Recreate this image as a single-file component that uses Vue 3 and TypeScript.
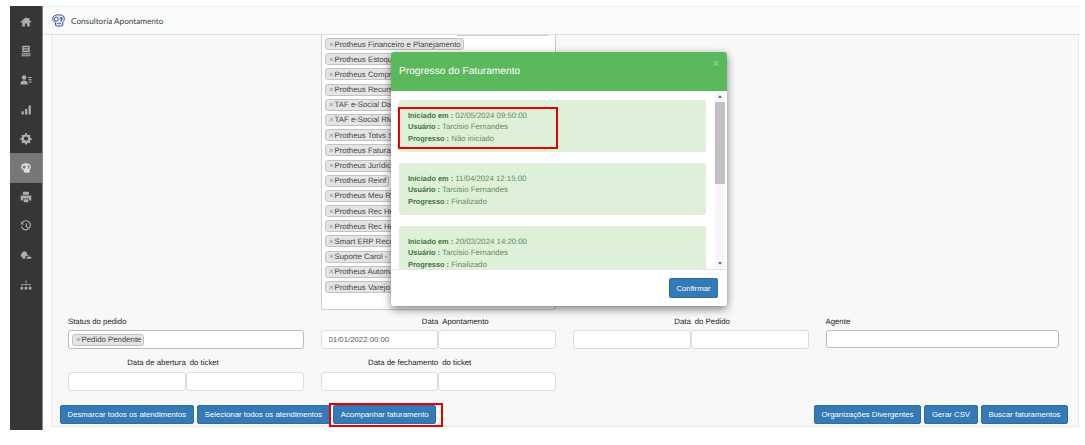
<script setup lang="ts">
const services: string[] = [
  'Protheus Financeiro e Planejamento', 'Protheus Estoque e Custos', 'Protheus Compras e Contratos',
  'Protheus Recursos Humanos', 'TAF e-Social Datasul', 'TAF e-Social RM', 'Protheus Totvs Saúde',
  'Protheus Faturamento', 'Protheus Jurídico', 'Protheus Reinf', 'Protheus Meu RH', 'Protheus Rec Humanos',
  'Protheus Rec Humanos II', 'Smart ERP Recursos', 'Suporte Carol - TOTVS', 'Protheus Automação', 'Protheus Varejo',
]
const history = [
  { date: '02/05/2024 09:50:00', status: 'Não iniciado' },
  { date: '11/04/2024 12:15:00', status: 'Finalizado' },
  { date: '20/03/2024 14:20:00', status: 'Finalizado' },
]
</script>

<template>
  <div class="page">
    <aside class="side">
      <div class="item"><svg viewBox="0 0 16 16"><path d="M8 1.500 .5 8l1 1L3 7.800V14h3.600v-4h2.800v4H13V7.800L14.500 9l1-1-3-2.600V2.500h-2v1.200z"/></svg></div>
      <div class="item"><svg viewBox="0 0 16 16"><path d="M3 1h10v8.500H3zM4.800 3v1.400h6.400V3zM4.800 6v1.400h6.400V6zM2 11h12v1.500H2zM2 13.500h12V15H2z"/></svg></div>
      <div class="item"><svg viewBox="0 0 16 16"><circle cx="5.500" cy="4.500" r="3"/><path d="M.5 14c0-3.500 2-5.500 5-5.500s5 2 5 5.500zM11 4h4.500v1.200H11zM11 7h4.500v1.200H11zM11.500 10h4v1.200h-4z"/></svg></div>
      <div class="item"><svg viewBox="0 0 16 16"><path d="M2 9.500h3V14H2zM6.700 6.500h3V14h-3zM11.400 2h3v12h-3z"/></svg></div>
      <div class="item"><svg viewBox="0 0 16 16"><path fill-rule="evenodd" d="M6.700 1h2.600l.4 2 1.300.6 1.700-1.100 1.800 1.800-1.100 1.700.6 1.300 2 .4v2.600l-2 .4-.6 1.300 1.100 1.700-1.800 1.800-1.700-1.100-1.300.6-.4 2H6.700l-.4-2-1.300-.6-1.700 1.100-1.800-1.800 1.100-1.700-.6-1.300-2-.4V7.700l2-.4.6-1.300-1.100-1.700 1.800-1.800L5 3.600l1.300-.6zM8 5.500a3 3 0 1 0 0 6 3 3 0 0 0 0-6z" transform="translate(.5 -.5) scale(.94)"/></svg></div>
      <div class="item active"><svg viewBox="0 0 16 16"><path fill-rule="evenodd" d="M8 1.500c3.500 0 6.500 1.500 6.500 4.500 0 2-.5 3-1.500 4v3.500c-2 1.200-6 1.200-8 0V11C2.500 10 1.500 8 1.500 6 1.500 3 4.500 1.500 8 1.500zM5.500 4.500a2 2 0 1 0 0 4 2 2 0 0 0 0-4zM10 5v1.200h1.500L10 9h1.500l1.500-4z"/></svg></div>
      <div class="item"><svg viewBox="0 0 16 16"><path fill-rule="evenodd" d="M4 1h8v4H4zM1 6h14v6.500h-3V10H4v2.500H1zM5 11h6v4H5z"/></svg></div>
      <div class="item"><svg viewBox="0 0 16 16" class="line"><path d="M3 3.500A6 6 0 1 1 2 8.500"/><path d="M8.500 4.500v4l2.500 2"/><path class="tip" d="M1.500 2v4h4z"/></svg></div>
      <div class="item"><svg viewBox="0 0 16 16"><path d="M1 9.500c0-3.500 2.500-6 5-6.500 1.500 0 3 1 3.500 3.500L11 9H8.500v1H7v3H3.500L3 11zM9 10.500h6V13H9zM10.500 9h3v1h-3z"/></svg></div>
      <div class="item"><svg viewBox="0 0 16 16"><path d="M7.400 1.500h1.200v4H7.400zM2 6.500h12V10h-1V7.500H8.500V10h-1V7.500H3V10H2zM.8 10.500h3.400V14H.8zM6.300 10.500h3.400V14H6.300zM11.800 10.500h3.400V14h-3.400z"/></svg></div>
    </aside>

    <main class="main">
      <header class="top">
        <svg class="brand" viewBox="0 0 16 16"><path fill="#dfe3f2" stroke="#3f5296" stroke-width="1.200" d="M8 1c3.800 0 7.300 1 7.300 4.500 0 2-.7 3.200-2 4.300V14c-2.500 1.300-6.700 1.300-9 0v-3.600C2.200 9.500.8 7.700.8 5.500.8 2.500 4.200 1 8 1z"/><circle cx="5.300" cy="6.200" r="2.300" fill="#fff" stroke="#3f5296" stroke-width="1.200"/><path d="M9.500 4.200h4L11.800 9h-1.700l1.300-3.300H9.500z" fill="#3f5296"/><path d="M6 11.500h5" stroke="#3f5296"/></svg>
        <span>Consultoria Apontamento</span>
      </header>

      <section class="panel">
        <div class="list-row">
          <div class="list-box">
            <div class="search-edge"></div>
            <div v-for="s in services" :key="s" class="list-line">
              <span class="chip"><i>×</i>{{ s }}</span>
            </div>
          </div>
        </div>

        <div class="form">
          <div class="field">
            <label>Status do pedido</label>
            <div class="select"><span class="chip"><i>×</i>Pedido Pendente</span></div>
          </div>
          <div class="field">
            <div class="pair-label"><label>Data</label><label>Apontamento</label></div>
            <div class="pair"><input value="01/01/2022 00:00" readonly><input readonly></div>
          </div>
          <div class="field">
            <div class="pair-label"><label>Data</label><label>do Pedido</label></div>
            <div class="pair"><input readonly><input readonly></div>
          </div>
          <div class="field">
            <label>Agente</label>
            <div class="select agent"></div>
          </div>
          <div class="field">
            <div class="pair-label"><label>Data de abertura</label><label>do ticket</label></div>
            <div class="pair"><input readonly><input readonly></div>
          </div>
          <div class="field">
            <div class="pair-label"><label>Data de fechamento</label><label>do ticket</label></div>
            <div class="pair"><input readonly><input readonly></div>
          </div>
        </div>

        <div class="actions">
          <button>Desmarcar todos os atendimentos</button>
          <button>Selecionar todos os atendimentos</button>
          <button class="marked">Acompanhar faturamento</button>
          <span class="spacer"></span>
          <button>Organizações Divergentes</button>
          <button>Gerar CSV</button>
          <button>Buscar faturamentos</button>
        </div>
      </section>
    </main>

    <div class="modal">
      <div class="modal-head">
        <h4>Progresso do Faturamento</h4>
        <span class="close">×</span>
      </div>
      <div class="modal-body">
        <div class="scroll-content">
          <div v-for="(h, i) in history" :key="h.date" class="alert">
            <div :class="{ marked: i === 0 }" class="alert-text">
              <p><b>Iniciado em :</b> {{ h.date }}</p>
              <p><b>Usuário :</b> Tarcisio Fernandes</p>
              <p><b>Progresso :</b> {{ h.status }}</p>
            </div>
          </div>
        </div>
        <div class="scrollbar">
          <svg viewBox="0 0 8 8"><path d="M4 2 7 6H1z"/></svg>
          <div class="thumb"></div>
          <svg viewBox="0 0 8 8"><path d="M4 6 7 2H1z"/></svg>
        </div>
      </div>
      <div class="modal-foot"><button>Confirmar</button></div>
    </div>
  </div>
</template>

<style>
html, body { margin: 0; background: #fff; }
</style>

<style scoped>
.page {
  position: relative; width: 1085px; height: 445px; overflow: hidden; display: flex; align-items: flex-start;
  padding: 6px 0 0 10px; box-sizing: border-box; text-rendering: geometricPrecision;
  font-family: "Liberation Sans", Arial, sans-serif; font-size: 7.800px; color: #333;
}
.side {
  width: 33px; height: 424px; box-sizing: border-box; flex: none; background: #363636; border-right: 1px solid #8a8a8a;
  display: flex; flex-direction: column; padding-top: 1.400px;
}
.item { height: 29.200px; flex: none; display: flex; align-items: center; justify-content: center; }
.item svg { width: 12px; height: 12px; fill: #aeaeae; }
.item svg.line { fill: none; stroke: #aeaeae; stroke-width: 1.500; }
.item .tip { fill: #aeaeae; stroke: none; }
.item.active { background: #777; }
.item.active svg { fill: #dcdcdc; }
.main { width: 1037px; flex: none; display: flex; flex-direction: column; }
.top {
  height: 29px; box-sizing: border-box; flex: none; background: #f9fafa; border-top: 1px solid #eef0ef; border-bottom: 1px solid #dcdfdf;
  display: flex; align-items: center; gap: 6px; padding-left: 9px; font-family: Lato, sans-serif; font-size: 8.200px; color: #444;
}
.brand { width: 13px; height: 13px; }
.panel {
  margin-left: 8px; width: 1028px; height: 392px; background: #f8f8f8; border-left: 1px solid #eaeaea; border-right: 1px solid #eaeaea;
  border-bottom: 1px solid #eaeaea; display: flex; flex-direction: column; box-sizing: border-box;
}
.list-row { padding-left: 269px; height: 275px; flex: none; }
.list-box {
  width: 235px; height: 275px; box-sizing: border-box; background: #fff; border: 1px solid #ccc; border-top: 0;
  border-radius: 0 0 3px 3px; padding: 0 3px;
}
.search-edge { width: 91px; margin-left: 132px; height: 0; border-bottom: 1px solid #ccc; margin-bottom: -1px; }
.list-line { height: 15.200px; box-sizing: border-box; display: flex; align-items: flex-start; padding-top: 3px; white-space: nowrap; overflow: hidden; }
.chip {
  display: inline-flex; align-items: center; height: 12px; box-sizing: border-box; padding: 0 2px 0 3px;
  background: #e4e4e4; border: 1px solid #c2c2c2; border-radius: 3px; font-size: 7.800px; color: #444; white-space: nowrap;
}
.chip i { font-style: normal; color: #888; margin-right: 1px; }
.form {
  display: grid; grid-template-columns: repeat(4, 235.500px); column-gap: 17px; row-gap: 8px;
  padding: 5.500px 0 0 16px; flex: none;
}
.field { display: flex; flex-direction: column; }
.field label { color: #222; line-height: 12px; height: 12px; margin-bottom: 2.500px; }
.pair-label { display: grid; grid-template-columns: 1fr 1fr; }
.pair-label label:first-child { text-align: right; }
.pair-label label:last-child { padding-left: 4px; }
.pair { display: grid; grid-template-columns: 1fr 1fr; }
.pair input {
  width: 100%; height: 19px; box-sizing: border-box; border: 1px solid #ddd; border-radius: 3px; background: #fff;
  padding: 0 7px; font: 7.800px "Liberation Sans", sans-serif; color: #555; outline: none; min-width: 0;
}
.select { height: 19px; box-sizing: border-box; background: #fff; border: 1px solid #bbb; border-radius: 3px; padding: 2.500px 3px; display: flex; align-items: flex-start; }
.select .chip { height: 12.500px; }
.select.agent { height: 18px; margin-right: 2px; }
.actions { display: flex; gap: 3.500px; padding: 14.500px 10px 0 8px; align-items: flex-start; }
.spacer { flex: 1; }
button {
  height: 19px; padding: 0 6.500px; background: #337ab7; color: #fff; border: 1px solid #2e6da4; border-radius: 2px;
  font: 7.800px "Liberation Sans", sans-serif; white-space: nowrap; margin: 0;
}
.actions button.marked { position: relative; }
.actions button.marked::after {
  content: ""; position: absolute; inset: -2.700px -7.500px -4.300px -5.500px; border: 2px solid #e60000; pointer-events: none;
}
.modal {
  position: absolute; left: 391px; top: 52px; width: 336px; height: 254px; background: #fff; border-radius: 3px;
  box-shadow: 0 3px 9px rgba(0,0,0,.5); display: flex; flex-direction: column; overflow: hidden;
}
.modal-head { height: 39px; flex: none; background: #5cb85c; color: #fff; display: flex; align-items: center; padding-left: 8px; position: relative; }
.modal-head h4 { margin: 0; font-weight: 400; font-size: 10.200px; }
.close { position: absolute; right: 8px; top: 6px; font-size: 11px; color: #8ccb8c; font-weight: 700; }
.modal-body { height: 178px; flex: none; display: flex; overflow: hidden; }
.scroll-content { flex: 1; padding: 9px 9px 0 8px; overflow: hidden; }
.alert { height: 52px; background: #dff0d8; border-radius: 2px; margin-bottom: 11px; color: #3c763d; padding: 9.500px 0 0 9px; box-sizing: border-box; position: relative; line-height: 11.500px; }
.alert p { margin: 0; color: #5c8f5c; }
.alert b { color: #3c763d; font-weight: 700; font-size: 7.400px; }
.alert-text.marked::after {
  content: ""; position: absolute; left: -1px; top: 7px; width: 160px; height: 42px; border: 2px solid #e60000; box-sizing: border-box;
}
.scrollbar { width: 10px; margin-right: 2px; flex: none; display: flex; flex-direction: column; background: #f6f6f6; }
.scrollbar svg { width: 10px; height: 11px; padding: 3px 1px; box-sizing: border-box; fill: #505050; flex: none; }
.thumb { height: 82px; background: #c1c1c1; flex: none; margin-bottom: auto; }
.modal-foot { flex: 1; border-top: 1px solid #e5e5e5; display: flex; align-items: center; justify-content: flex-end; padding-right: 9px; }
.modal-foot button { height: 20px; width: 49px; padding: 0; }
</style>
